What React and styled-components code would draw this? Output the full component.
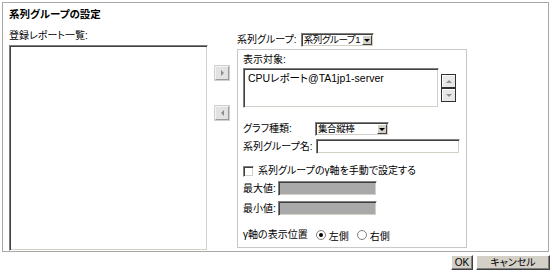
import React from 'react';
import styled, { createGlobalStyle } from 'styled-components';

const GlobalStyle = createGlobalStyle`
  html, body {
    margin: 0;
    padding: 0;
    background: #ffffff;
  }
  body {
    font-family: 'Liberation Sans', 'Noto Sans CJK JP', sans-serif;
    font-size: 10px;
    font-feature-settings: 'palt';
    color: #000000;
  }
`;

const Page = styled.div`
  width: 552px;
  height: 275px;
  padding: 2px 0 0 2px;
  box-sizing: border-box;
`;

const Frame = styled.section`
  width: 547px;
  height: 250px;
  box-sizing: border-box;
  border: 1px solid #a8a8a8;
  padding: 5px 0 0 6px;
`;

const Title = styled.h1`
  margin: 0;
  height: 12px;
  font-size: 10.5px;
  line-height: 12px;
  font-weight: 700;
`;

const Body = styled.div`
  margin-top: 10px;
  display: flex;
  align-items: flex-start;
`;

const LeftColumn = styled.div`
  display: flex;
  flex-direction: column;
  width: 199px;
`;

const Label = styled.span`
  flex-shrink: 0;
  height: 12px;
  line-height: 12px;
  white-space: nowrap;
  width: ${p => (p.$w ? `${p.$w}px` : 'auto')};
`;

const insetBorder = `
  border-style: solid;
  border-width: 1px;
  border-color: #808080 #ffffff #ffffff #808080;
  box-shadow: inset 1px 1px 0 #404040, inset -1px -1px 0 #d4d0c8;
  box-sizing: border-box;
`;

const ListBox = styled.div`
  ${insetBorder}
  flex-shrink: 0;
  margin-top: ${p => (p.$flush ? 0 : 3)}px;
  width: ${p => p.$w}px;
  height: ${p => p.$h}px;
  background: #ffffff;
  padding: 3px 4px;
  font-size: 10.5px;
  line-height: 12px;
  white-space: nowrap;
`;

const MoveColumn = styled.div`
  width: 28px;
  display: flex;
  flex-direction: column;
  align-items: center;
  gap: 26px;
  padding-top: 36px;
`;

const SmallButton = styled.button`
  width: 14px;
  height: 14px;
  padding: 0;
  border: 1px solid;
  border-color: #f4f4f4 #9a9a9a #9a9a9a #f4f4f4;
  box-shadow: 0 0 0 1px #cfcfcf;
  background: #e2e2e2;
  display: flex;
  align-items: center;
  justify-content: center;
`;

const RightColumn = styled.div`
  display: flex;
  flex-direction: column;
  margin-left: 1px;
  padding-top: 3px;
`;

const Row = styled.div`
  display: flex;
  align-items: center;
  gap: ${p => p.$gap || 0}px;
  margin-top: ${p => p.$mt || 0}px;
  height: ${p => p.$h || 14}px;
  white-space: nowrap;
`;

const SelectBox = styled.div`
  ${insetBorder}
  flex-shrink: 0;
  width: ${p => p.$w}px;
  height: 14px;
  background: #ffffff;
  display: flex;
  align-items: center;
  padding: 0 1px 0 0;
`;

const SelectText = styled.span`
  flex: 1;
  min-width: 0;
  padding-left: 2px;
  font-size: 9.5px;
  letter-spacing: -0.4px;
  line-height: 12px;
  white-space: nowrap;
`;

const SelectArrow = styled.span`
  width: 10px;
  height: 10px;
  flex-shrink: 0;
  background: #d4d0c8;
  border: 1px solid;
  border-color: #ffffff #404040 #404040 #ffffff;
  box-sizing: border-box;
  display: flex;
  align-items: center;
  justify-content: center;
`;

const Fieldset = styled.div`
  margin-top: 2px;
  width: 230px;
  height: 199px;
  box-sizing: border-box;
  border: 1px solid #c8c8c8;
  padding: 4px 0 0 5px;
  display: flex;
  flex-direction: column;
`;

const TargetRow = styled.div`
  display: flex;
  align-items: center;
  gap: 2px;
  margin-top: 2px;
`;

const ScrollButtons = styled.div`
  display: flex;
  flex-direction: column;
`;

const ScrollButton = styled.button`
  width: 15px;
  height: 14px;
  padding: 0;
  border: 1px solid #303030;
  background: #e8e8e8;
  box-shadow: inset 1px 1px 0 #ffffff;
  display: flex;
  align-items: center;
  justify-content: center;
`;

const TextInput = styled.div`
  ${insetBorder}
  flex-shrink: 0;
  width: ${p => p.$w}px;
  height: 15px;
  background: ${p => (p.$disabled ? '#a9a9a9' : '#ffffff')};
`;

const CheckBox = styled.span`
  flex-shrink: 0;
  width: 11px;
  height: 11px;
  box-sizing: border-box;
  border: 1px solid;
  border-color: #808080 #ffffff #ffffff #808080;
  box-shadow: inset 1px 1px 0 #404040, inset -1px -1px 0 #d4d0c8;
  background: #ffffff;
  margin-right: 4px;
`;

const Radio = styled.span`
  width: 10px;
  height: 10px;
  box-sizing: border-box;
  border-radius: 50%;
  border: 1px solid #808080;
  background: #ffffff;
  display: inline-flex;
  align-items: center;
  justify-content: center;
  margin-right: 3px;
  &::after {
    content: '';
    width: 4px;
    height: 4px;
    border-radius: 50%;
    background: ${p => (p.$checked ? '#000000' : 'transparent')};
  }
`;

const RadioOption = styled.span`
  display: inline-flex;
  align-items: center;
  margin-left: ${p => p.$ml || 0}px;
`;

const Footer = styled.div`
  display: flex;
  justify-content: flex-end;
  gap: 3px;
  width: 548px;
  margin-top: 3px;
`;

const Button = styled.button`
  height: 15px;
  width: ${p => p.$w}px;
  padding: 0;
  font-family: inherit;
  font-size: 10px;
  font-feature-settings: 'palt';
  line-height: 11px;
  color: #000000;
  background: #d4d0c8;
  border: 1px solid;
  border-color: #ffffff #404040 #404040 #ffffff;
  box-shadow: inset -1px -1px 0 #808080;
`;

const Triangle = ({ dir, color = '#000' }) => {
  const points = {
    down: '0,0 6,0 3,3',
    up: '0,3 6,3 3,0',
    right: '0,0 3,3 0,6',
    left: '3,0 0,3 3,6',
  }[dir];
  const vertical = dir === 'up' || dir === 'down';
  return (
    <svg width={vertical ? 6 : 3} height={vertical ? 3 : 6} viewBox={vertical ? '0 0 6 3' : '0 0 3 6'}>
      <polygon points={points} fill={color} />
    </svg>
  );
};

const Select = ({ w, value }) => (
  <SelectBox $w={w}>
    <SelectText>{value}</SelectText>
    <SelectArrow>
      <Triangle dir="down" />
    </SelectArrow>
  </SelectBox>
);

export default function App() {
  return (
    <Page>
      <GlobalStyle />
      <Frame>
        <Title>系列グループの設定</Title>
        <Body>
          <LeftColumn>
            <Label>登録レポート一覧:</Label>
            <ListBox $w={199} $h={206} />
          </LeftColumn>
          <MoveColumn>
            <SmallButton>
              <Triangle dir="right" color="#8c8c8c" />
            </SmallButton>
            <SmallButton>
              <Triangle dir="left" color="#8c8c8c" />
            </SmallButton>
          </MoveColumn>
          <RightColumn>
            <Row $gap={4}>
              <Label>系列グループ:</Label>
              <Select w={73} value="系列グループ1" />
            </Row>
            <Fieldset>
              <Label>表示対象:</Label>
              <TargetRow>
                <ListBox $w={196} $h={40} $flush>
                  CPUレポート@TA1jp1-server
                </ListBox>
                <ScrollButtons>
                  <ScrollButton>
                    <Triangle dir="up" color="#909090" />
                  </ScrollButton>
                  <ScrollButton>
                    <Triangle dir="down" color="#909090" />
                  </ScrollButton>
                </ScrollButtons>
              </TargetRow>
              <Row $mt={14} $h={14}>
                <Label $w={72}>グラフ種類:</Label>
                <Select w={74} value="集合縦棒" />
              </Row>
              <Row $mt={3} $h={15}>
                <Label $w={73}>系列グループ名:</Label>
                <TextInput $w={144} />
              </Row>
              <Row $mt={10}>
                <CheckBox />
                <Label>系列グループのγ軸を手動で設定する</Label>
              </Row>
              <Row $mt={3} $h={15}>
                <Label $w={35}>最大値:</Label>
                <TextInput $w={99} $disabled />
              </Row>
              <Row $mt={5} $h={15}>
                <Label $w={35}>最小値:</Label>
                <TextInput $w={99} $disabled />
              </Row>
              <Row $mt={12}>
                <Label>γ軸の表示位置</Label>
                <RadioOption $ml={8}>
                  <Radio $checked />
                  左側
                </RadioOption>
                <RadioOption $ml={8}>
                  <Radio />
                  右側
                </RadioOption>
              </Row>
            </Fieldset>
          </RightColumn>
        </Body>
      </Frame>
      <Footer>
        <Button $w={22}>OK</Button>
        <Button $w={74}>キャンセル</Button>
      </Footer>
    </Page>
  );
}
